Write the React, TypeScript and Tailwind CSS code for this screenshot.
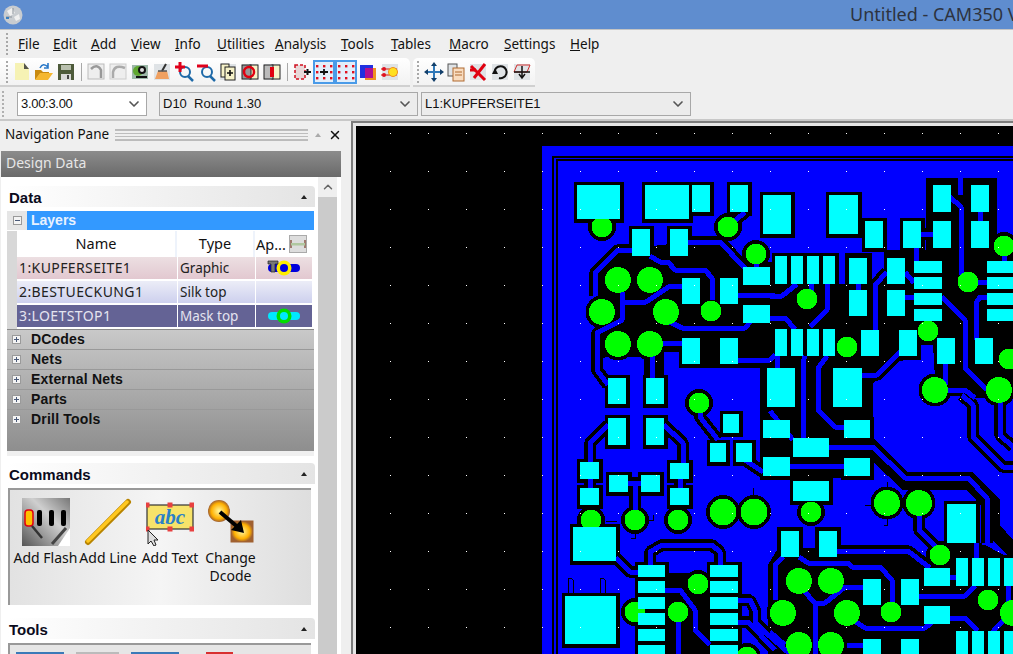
import { ChevronDown, ChevronUp, X } from 'lucide-react';

// ---------- pcb data, all coordinates are screen pixels ----------
const pads = [
  [577, 185, 620, 219], [645, 185, 689, 219], [692, 185, 710, 212], [730, 185, 748, 212], [763, 195, 791, 234],
  [632, 229, 650, 256], [670, 229, 688, 256], [682, 278, 700, 304], [720, 278, 738, 304], [743, 267, 770, 285],
  [743, 305, 770, 323], [682, 338, 700, 364], [720, 338, 738, 364], [608, 378, 626, 404], [646, 378, 664, 404],
  [767, 368, 795, 407], [829, 195, 858, 234], [865, 221, 883, 248], [903, 221, 921, 248], [933, 185, 951, 212],
  [971, 185, 989, 212], [933, 221, 951, 248], [971, 221, 989, 248], [775, 256, 787, 284], [791, 256, 803, 284],
  [807, 256, 819, 284], [823, 256, 835, 284], [849, 258, 867, 284], [887, 258, 905, 284], [849, 290, 867, 316],
  [887, 290, 905, 316], [914, 261, 942, 273], [914, 277, 942, 289], [914, 293, 942, 305], [914, 309, 942, 321],
  [987, 261, 1013, 273], [987, 277, 1013, 289], [987, 293, 1013, 305], [987, 309, 1013, 321], [775, 329, 787, 356],
  [791, 329, 803, 356], [807, 329, 819, 356], [823, 329, 835, 356], [861, 330, 879, 356], [899, 330, 917, 356],
  [937, 338, 955, 364], [975, 338, 993, 364], [833, 368, 862, 407], [608, 418, 626, 445], [646, 418, 664, 445],
  [723, 414, 739, 433], [763, 420, 790, 438], [710, 443, 726, 462], [736, 443, 752, 462], [763, 457, 790, 476],
  [580, 462, 599, 479], [670, 463, 689, 479], [609, 475, 628, 492], [641, 475, 660, 492], [580, 488, 599, 505],
  [670, 488, 689, 505], [573, 527, 616, 561], [565, 596, 616, 644], [638, 565, 665, 577], [638, 581, 665, 593],
  [638, 597, 665, 609], [638, 613, 665, 625], [638, 629, 665, 641], [638, 645, 665, 657], [710, 565, 738, 577],
  [710, 581, 738, 593], [710, 597, 738, 609], [710, 613, 738, 625], [710, 629, 738, 641], [710, 645, 738, 657],
  [793, 438, 829, 457], [844, 420, 870, 438], [844, 458, 870, 476], [793, 481, 829, 501], [781, 531, 799, 557],
  [819, 531, 837, 557], [947, 504, 976, 543], [956, 558, 968, 586], [972, 558, 984, 586], [988, 558, 1000, 586],
  [1004, 558, 1013, 586], [924, 568, 950, 586], [924, 606, 950, 624], [863, 579, 881, 605], [901, 579, 919, 605],
  [863, 639, 881, 654], [901, 639, 919, 654], [956, 631, 968, 654], [972, 631, 984, 654], [988, 631, 1000, 654],
  [1004, 631, 1013, 654],
];

const vias = [
  [602, 227, 10.5], [728, 227, 10.5], [756, 254, 10.5], [618, 280, 13], [650, 280, 13], [602, 312, 13], [666, 312, 13],
  [711, 311, 10.5], [618, 344, 13], [650, 344, 13], [699, 403, 10.5], [1004, 246, 10.5], [807, 299, 10.5], [968, 282, 10.5],
  [928, 331, 10.5], [847, 347, 10.5], [1009, 359, 10.5], [935, 390, 13], [999, 390, 13], [591, 520, 10.5], [635, 520, 10.5],
  [678, 520, 10.5], [723, 512, 13.5], [754, 512, 13.5], [698, 584, 10.5], [678, 612, 10.5], [635, 612, 10.5], [747, 657, 10.5],
  [1013, 613, 13], [811, 512, 10.5], [887, 503, 13], [919, 503, 13], [940, 555, 10.5], [799, 581, 13], [831, 581, 13],
  [783, 613, 13], [847, 613, 13], [891, 612, 10.5], [988, 600, 10.5], [799, 645, 13], [831, 645, 13],
];

const blackAreas = [
  '597,278 620,250 720,238 748,262 775,262 775,368 680,368 680,352 664,352 664,378 644,378 644,357 606,357 597,362',
  '775,253 839,253 839,284 845,284 845,253 872,253 872,280 884,268 884,250 926,250 926,178 960,178 960,192 964,196 964,178 997,178 997,236 1013,236 1013,398 962,398 935,378 933,345 920,345 920,359 897,361 873,383 873,438 907,472 972,472 1000,500 1000,525 1013,540 1013,560 987,535 985,510 967,490 903,490 873,462 873,478 760,478 760,368 775,368',
  '768,654 768,565 777,550 777,527 803,527 803,548 815,548 815,527 841,527 841,546 912,546 925,560 935,545 985,545 1013,560 1013,654',
  '666,573 708,573 708,654 666,654',
];

const traces = [
  '632,250 618,250 595,273 595,296', '622,292 622,320 597,333 597,370 608,385',
  '622,302 646,302 670,286 682,286', '650,256 660,262 668,262 675,270 705,270 712,278 712,300',
  '688,242 720,242 745,268', '738,295 775,295', '670,322 682,328 745,328 752,320', '660,343 682,343',
  '738,360 770,360 775,355', '652,356 652,378', '728,227 745,212', '756,254 756,268',
  '770,296 782,296 797,284', '811,284 811,292', '827,284 827,310 810,327', '770,318 785,318 795,329',
  '777,356 777,368', '805,356 803,362 803,438', '827,356 818,368 818,410 835,427 844,427', '858,284 858,290',
  '905,272 914,283', '887,272 875,285 875,330', '905,297 914,297', '916,248 916,261', '921,234 933,234',
  '950,197 961,207 961,275', '960,178 960,195', '980,212 980,221', '1004,256 1004,261', '978,282 987,282',
  '987,297 980,297 976,303 976,340', '942,297 965,320 965,368 987,390', '945,364 945,385', '948,390 965,390 975,398',
  '862,375 877,375 900,352', '883,227 865,227',
  '829,447 873,447 905,478 968,478 987,498 987,543', '790,466 844,466',
  '919,515 919,530 937,548', '770,411 793,440', '962,395 973,405 973,437 1003,467 1013,467', '1000,395 1000,435 1013,447',
  '799,557 808,563 848,563 852,567 880,567 892,580 892,605', '837,551 908,551 930,568', '950,577 956,577',
  '919,596 965,596 975,586', '863,587 845,587 825,603 815,603 803,590', '815,603 815,654',
  '856,622 865,628 925,628 935,620', '950,618 965,618 978,631', '847,645 863,645', '783,557 775,565 775,600',
  '770,632 785,645', '1008,586 1008,615 990,635', '976,543 977,558',
  '608,425 590,443 590,462', '664,425 683,443 683,463', '628,483 641,483', '635,483 635,520', '590,479 590,488', '680,479 680,488',
  '616,558 630,572 638,572', '650,565 650,552 662,545 712,545 720,552 720,565', '700,410 700,417 718,440',
  '745,460 763,472', '665,590 680,590 695,610 695,630 710,645', '738,600 750,600 755,610 755,622 765,632 790,654',
  '738,622 748,622 775,650', '678,620 678,654',
];

const thinLines = [
  'M568 596 V580 Q570 576 573 580 V596', 'M600 596 V580 Q602 576 605 580 V596',
  'M617 521 H606', 'M645 520 H653 V515', 'M635 531 V538 H631', 'M753 498 V488', 'M766 513 H771',
  'M887 490 V482', 'M887 516 V525 H884', 'M875 505 H865',
];

const gridX = Array.from({ length: 17 }, (_, i) => 390 + i * 38);
const gridY = Array.from({ length: 14 }, (_, i) => 133 + i * 38);

function PcbView() {
  return (
    <svg viewBox="356 126 657 528" width={657} height={528} shapeRendering="crispEdges" className="block">
      <rect x="356" y="126" width="657" height="528" fill="#000" />
      <rect x="542" y="146" width="471" height="508" fill="#0000ff" />
      <path d="M553 654 V157 H1013 M557 654 V160 H1013" fill="none" stroke="#000" strokeWidth="2" />
      {blackAreas.map((p, i) => <polygon key={i} points={p} fill="#000" />)}
      {traces.map((p, i) => <polyline key={i} points={p} fill="none" stroke="#000" strokeWidth="12" strokeLinejoin="bevel" />)}
      {vias.map(([x, y, r], i) => <circle key={i} cx={x} cy={y} r={r + 3.5} fill="#000" />)}
      {pads.map(([a, b, c, d], i) => <rect key={i} x={a - 3.5} y={b - 3.5} width={c - a + 7} height={d - b + 7} fill="#000" />)}
      {traces.map((p, i) => <polyline key={i} points={p} fill="none" stroke="#0000ff" strokeWidth="5" strokeLinejoin="bevel" />)}
      {thinLines.map((d, i) => <path key={i} d={d} fill="none" stroke="#000" strokeWidth="1" />)}
      {vias.map(([x, y, r], i) => <circle key={i} cx={x} cy={y} r={r} fill="#00ff00" />)}
      {pads.map(([a, b, c, d], i) => <rect key={i} x={a} y={b} width={c - a} height={d - b} fill="#00ffff" />)}
      {gridY.map((y) => gridX.map((x) => <rect key={x + '-' + y} x={x} y={y} width="1" height="1" fill="#fff" />))}
    </svg>
  );
}

// ---------- toolbar icons ----------
const Ic = ({ children }: { children: React.ReactNode }) => (
  <svg viewBox="0 0 20 20" width={20} height={20} className="shrink-0">{children}</svg>
);
const Tile = () => <rect x="2" y="2" width="16" height="16" fill="#dfe3e6" />;

const toolIcons: Record<string, React.ReactNode> = {
  neu: <><path d="M3 1 H12 L17 7 V18 H3 Z" fill="#f6f2b4" /><path d="M12 1 L17 7 H12 Z" fill="#55554a" /></>,
  open: <><path d="M1 18 V8 H7 L9 10 H15 V12 H6 Z" fill="#c98a10" /><path d="M1 18 L6 11 H19 L14 18 Z" fill="#f5b731" /><path d="M6 6 Q9 0 14 5 M14 1 V6 H10" fill="none" stroke="#2a78c8" strokeWidth="1.6" /></>,
  save: <><rect x="2" y="2" width="16" height="16" fill="#4d5a3a" /><rect x="5" y="3" width="10" height="5" fill="#b9c0ae" /><rect x="5" y="12" width="10" height="6" fill="#d8d8d8" /><rect x="11" y="13" width="2" height="4" fill="#444" /></>,
  undo: <><rect x="2" y="2" width="16" height="15" fill="#eee" stroke="#bbb" /><path d="M5 7 Q11 1 15 8 L15 16" fill="none" stroke="#999" strokeWidth="2.5" /></>,
  redo: <><rect x="2" y="2" width="16" height="15" fill="#eee" stroke="#ccc" /><path d="M17 6 Q7 2 5 10 L5 16" fill="none" stroke="#aaa" strokeWidth="2.5" /></>,
  layers: <><rect x="2" y="3" width="16" height="14" fill="#9db8a8" /><circle cx="8" cy="9" r="5" fill="#5fa830" /><circle cx="12" cy="8" r="4" fill="#111" /><circle cx="12" cy="8" r="2" fill="#ddd" /><path d="M6 15 H17" stroke="#111" strokeWidth="2" /></>,
  brush: <><Tile /><path d="M3 17 L6 9 H15 L17 17 Z" fill="#f0a060" /><path d="M10 9 L14 2" stroke="#333" strokeWidth="2" /><path d="M6 9 H15" stroke="#555" strokeWidth="1.5" /></>,
  zoomIn: <><circle cx="11" cy="10" r="5" fill="none" stroke="#1f6aa8" strokeWidth="2" /><path d="M14 14 L19 19" stroke="#1f6aa8" strokeWidth="2.5" /><path d="M1 5 H11 M6 0 V10" stroke="#e0001a" strokeWidth="3" /></>,
  zoomOut: <><circle cx="11" cy="10" r="5" fill="none" stroke="#1f6aa8" strokeWidth="2" /><path d="M14 14 L19 19" stroke="#1f6aa8" strokeWidth="2.5" /><path d="M1 4 H12" stroke="#e0001a" strokeWidth="3" /></>,
  pageAdd: <><Tile /><rect x="3" y="2" width="8" height="13" fill="#f6f2c8" stroke="#222" /><rect x="7" y="5" width="10" height="13" fill="#f6f2c8" stroke="#222" /><path d="M9 11 H15 M12 8 V14" stroke="#111" strokeWidth="1.6" /></>,
  pageRing: <><Tile /><rect x="10" y="3" width="8" height="14" fill="#f6f2c8" stroke="#222" /><rect x="2" y="3" width="9" height="14" fill="#999" stroke="#222" /><circle cx="9" cy="10" r="5" fill="none" stroke="#e00010" strokeWidth="2.5" /></>,
  pageBar: <><Tile /><rect x="10" y="3" width="8" height="14" fill="#f6f2c8" stroke="#222" /><rect x="2" y="3" width="9" height="14" fill="#bbb" stroke="#222" /><rect x="8" y="5" width="4" height="10" fill="#e00010" /></>,
  box: <><rect x="3" y="3" width="10" height="14" fill="#e8d8d8" stroke="#d01020" strokeWidth="1.5" strokeDasharray="3 2" /><path d="M12 10 H19 M15.5 7 V13" stroke="#111" strokeWidth="2" /></>,
  gridA: <>{[3, 9, 15].flatMap((y) => [2, 9, 16].map((x) => <rect key={x + '' + y} x={x} y={y} width="2.4" height="2.4" fill="#e0101e" />))}<path d="M6 10 H14 M10 7 V13" stroke="#111" strokeWidth="1.8" /></>,
  gridB: <>{[3, 9, 15].flatMap((y) => [2, 9, 16].map((x) => <rect key={x + '' + y} x={x} y={y} width="2.4" height="2.4" fill="#e0101e" />))}</>,
  color: <><rect x="2" y="3" width="13" height="13" fill="#2030e0" /><rect x="7" y="6" width="11" height="12" fill="#f09020" /><rect x="7" y="6" width="8" height="10" fill="#b01090" /></>,
  spark: <><Tile /><path d="M1 7 H17 M1 13 H17" stroke="#e06050" strokeWidth="1.5" /><circle cx="4" cy="7" r="2" fill="#e01020" /><circle cx="4" cy="13" r="2" fill="#e01020" /><circle cx="13" cy="10" r="4.5" fill="#ffe020" stroke="#f09020" /></>,
  move: <><path d="M10 2 V18 M2 10 H18" stroke="#2f78b8" strokeWidth="2" /><path d="M10 0 L13 4 H7 Z M10 20 L13 16 H7 Z M0 10 L4 7 V13 Z M20 10 L16 7 V13 Z" fill="#123f6a" /></>,
  copy: <><rect x="2" y="2" width="9" height="12" fill="#dfe3e6" stroke="#555" /><rect x="7" y="6" width="11" height="13" fill="#f8dcc0" stroke="#b06a30" /><path d="M9 10 H16 M9 13 H16" stroke="#b06a30" /></>,
  del: <><Tile /><path d="M3 4 L17 18 M17 2 L6 16" stroke="#e00010" strokeWidth="3" /><path d="M2 8 H8" stroke="#e00010" strokeWidth="3" /></>,
  rotate: <><Tile /><path d="M5 8 A6 6 0 1 1 9 16" fill="none" stroke="#111" strokeWidth="2" /><path d="M2 12 L8 12 L5 6 Z" fill="#111" /></>,
  mirror: <><Tile /><path d="M5 3 H18 L15 10 H2 Z" fill="none" stroke="#d03030" /><path d="M2 10 H18 M10 4 V15 M7 12 L10 16 L13 12" stroke="#111" strokeWidth="1.5" fill="none" /></>,
};

const Grip = () => (
  <div className="flex flex-col gap-[2px] w-[2px]">
    {[0, 1, 2, 3, 4, 5].map((i) => <span key={i} className="w-[2px] h-[2px] bg-[#a8a8a8]" />)}
  </div>
);

function ToolBtn({ name, active }: { name: string; active?: boolean }) {
  return (
    <div className={active
      ? 'w-[22px] h-[24px] flex items-center justify-center border-2 border-[#4a9be8] bg-[#e3eefa]'
      : 'w-[22px] h-[24px] flex items-center justify-center'}>
      <Ic>{toolIcons[name]}</Ic>
    </div>
  );
}

const ToolSep = () => <div className="w-[8px] flex justify-center"><span className="w-px h-[18px] bg-[#a9a9a9]" /></div>;

function MenuBar() {
  const items: [string, string, number][] = [
    ['F', 'ile', 53], ['E', 'dit', 91], ['A', 'dd', 131], ['V', 'iew', 175], ['I', 'nfo', 217], ['U', 'tilities', 275],
    ['A', 'nalysis', 341], ['T', 'ools', 391], ['T', 'ables', 449], ['M', 'acro', 504], ['S', 'ettings', 570], ['H', 'elp', 640],
  ];
  let prev = 18;
  return (
    <div className="h-[28px] flex items-center pl-[6px] text-[13.5px] text-[#111]">
      <Grip />
      <div className="w-[10px]" />
      {items.map(([first, rest, next]) => {
        const w = next - prev;
        prev = next;
        return (
          <span key={first + rest} style={{ width: w }}>
            <span className="underline">{first}</span>{rest}
          </span>
        );
      })}
    </div>
  );
}

function Combo({ label, width, white }: { label: string; width: string; white?: boolean }) {
  return (
    <div className={`${width} h-[24px] flex items-center justify-between pl-[3px] pr-[4px] border border-[#a8a8a8] font-['Liberation_Sans',sans-serif] text-[13px] text-[#111] ${white ? 'bg-white tracking-[-0.3px]' : 'bg-[#ececec]'}`}>
      <span className="whitespace-pre">{label}</span>
      <ChevronDown size={16} strokeWidth={2.5} color="#555" />
    </div>
  );
}

// ---------- left pane ----------
function SectionHead({ title }: { title: string }) {
  return (
    <div className="w-[308px] h-[21px] flex items-center justify-between pl-[2px] pr-[8px] rounded-t-[4px] bg-gradient-to-r from-white to-[#e4e4e4]">
      <span className="pt-[4px] font-['Liberation_Sans',sans-serif] font-bold text-[15px] text-[#0b0b1c]">{title}</span>
      <span className="w-0 h-0 border-x-[3px] border-x-transparent border-b-[4px] border-b-[#222]" />
    </div>
  );
}

function TreeBtn({ minus }: { minus?: boolean }) {
  return (
    <span className="relative w-[9px] h-[9px] border border-[#9a9a9a] bg-[#f4f4f4] block">
      <span className="absolute left-[1px] top-[3px] w-[5px] h-px bg-[#4a5a78]" />
      {!minus && <span className="absolute left-[3px] top-[1px] w-px h-[5px] bg-[#4a5a78]" />}
    </span>
  );
}

const LayerRow = ({ name, type, bg, text, icon }: { name: string; type: string; bg: string; text: string; icon?: React.ReactNode }) => (
  <div className={`h-[22px] flex mb-[2px] text-[14px] ${text}`}>
    <div className={`w-[160px] pl-[2px] leading-[22px] tracking-[0.4px] ${bg}`}>{name}</div>
    <div className={`w-[77px] ml-[1px] pl-[2px] leading-[22px] text-[13.5px] ${bg}`}>{type}</div>
    <div className={`w-[56px] ml-[1px] flex items-center justify-center ${bg}`}>{icon}</div>
  </div>
);

const ApCopper = (
  <svg viewBox="0 0 34 16" width={34} height={16}>
    <rect x="1" y="4" width="32" height="8" rx="4" fill="#0000dd" />
    <circle cx="17" cy="8" r="7.5" fill="#ffee00" />
    <circle cx="17" cy="8" r="4" fill="#0000dd" />
    <path d="M1 1 H11 V4 H8 V12 H4 V4 H1 Z" fill="#777" stroke="#222" strokeWidth="0.7" />
  </svg>
);
const ApMask = (
  <svg viewBox="0 0 34 16" width={34} height={16}>
    <rect x="1" y="4" width="32" height="8" rx="4" fill="#00e8ff" />
    <circle cx="17" cy="8" r="7.5" fill="#00dd00" />
    <circle cx="17" cy="8" r="4" fill="#00e8ff" />
  </svg>
);

const AddFlash = (
  <svg viewBox="0 0 48 48" width={48} height={48}>
    <defs><linearGradient id="fl" x1="0" y1="1" x2="1" y2="0"><stop offset="0" stopColor="#555" /><stop offset="0.6" stopColor="#cfcfcf" /><stop offset="1" stopColor="#777" /></linearGradient></defs>
    <rect width="48" height="48" fill="url(#fl)" />
    <path d="M36 48 L48 30 V48 Z" fill="#fff" />
    <rect x="3" y="12" width="8" height="16" rx="3" fill="#ffc000" stroke="#e00010" strokeWidth="1.5" />
    {[15, 27, 39].map((x) => <rect key={x} x={x} y="12" width="5" height="16" rx="2" fill="#000" />)}
    <path d="M10 28 L20 40" stroke="#333" strokeWidth="2.5" />
    <path d="M30 46 L44 30" stroke="#444" strokeWidth="3" />
  </svg>
);
const AddLine = (
  <svg viewBox="0 0 48 48" width={48} height={48}>
    <path d="M4 44 L44 4" stroke="#b88400" strokeWidth="6" strokeLinecap="round" />
    <path d="M4 43 L43 4" stroke="#ffc820" strokeWidth="3.5" strokeLinecap="round" />
  </svg>
);
const AddText = (
  <svg viewBox="0 0 48 48" width={48} height={48}>
    <rect x="1" y="7" width="46" height="24" fill="#f7e36a" stroke="#333" strokeWidth="1.2" />
    <text x="24" y="26" textAnchor="middle" fontFamily="'Liberation Serif', serif" fontStyle="italic" fontWeight="bold" fontSize="21" fill="#2a80c8">abc</text>
    {[[1, 7], [24, 7], [46, 7], [1, 31], [24, 31], [46, 31]].map(([x, y]) => <rect key={x + '-' + y} x={x - 2.5} y={y - 2.5} width="5" height="5" fill="#e84040" />)}
    <path d="M2 32 V46 L5 43 L8 48 L10 47 L8 42 L12 42 Z" fill="#ddd" stroke="#222" />
  </svg>
);
const ChangeDcode = (
  <svg viewBox="0 0 48 48" width={48} height={48}>
    <defs>
      <radialGradient id="cg"><stop offset="0" stopColor="#fff8a0" /><stop offset="0.7" stopColor="#ffb000" /><stop offset="1" stopColor="#a06030" /></radialGradient>
    </defs>
    <circle cx="12" cy="13" r="11" fill="url(#cg)" />
    <rect x="24" y="23" width="22" height="21" fill="url(#cg)" stroke="#a06030" />
    <path d="M13 14 L33 31" stroke="#000" strokeWidth="4" />
    <path d="M37 35 L24 32 L34 22 Z" fill="#000" />
  </svg>
);

const commands = [
  { icon: AddFlash, label: 'Add Flash', w: 71 },
  { icon: AddLine, label: 'Add Line', w: 54 },
  { icon: AddText, label: 'Add Text', w: 70 },
  { icon: ChangeDcode, label: 'Change\nDcode', w: 51 },
];

function NavPane() {
  return (
    <div className="w-[351px] flex flex-col shrink-0 overflow-hidden">
      <div className="h-[27px] flex items-center pl-[5px] text-[13.5px] text-[#111]">
        <span className="w-[110px] whitespace-nowrap">Navigation Pane</span>
        <div className="w-[193px] h-[12px] border-y border-[#bbb] bg-[repeating-linear-gradient(#bdbdbd_0_1px,#efefef_1px_3px)]" />
        <span className="ml-[7px] w-0 h-0 border-x-[3px] border-x-transparent border-b-[4px] border-b-[#aaa]" />
        <X size={14} strokeWidth={2.5} color="#111" className="ml-[7px]" />
      </div>
      <div className="w-[340px] ml-[1px] mt-[3px] h-[26px] flex items-center pl-[5px] pb-[3px] text-[14px] text-[#e6e6e6] bg-gradient-to-b from-[#8c8c8c] to-[#6a6a6a]">
        Design Data
      </div>
      <div className="flex flex-1 min-h-0 ml-[1px] w-[340px] overflow-hidden">
        <div className="w-[317px] bg-white pl-[6px] pt-[9px] overflow-hidden">
          <SectionHead title="Data" />
          <div className="w-[307px] mt-[4px] h-[19px] flex">
            <div className="w-[20px] bg-[#e6e6e6] flex items-center justify-center"><TreeBtn minus /></div>
            <div className="flex-1 bg-[#3399ff] pl-[4px] font-['Liberation_Sans',sans-serif] font-bold text-[14px] leading-[19px] text-[#e8f2ff]">Layers</div>
          </div>
          <div className="w-[307px] flex bg-white mt-[1px]">
            <div className="w-[10px] bg-[#d8d8d8]" />
            <div className="flex-1 pt-0">
              <div className="h-[26px] flex text-[14.5px] text-[#111]">
                <div className="w-[160px] text-center leading-[24px] border-r-2 border-[#eef3fb]">Name</div>
                <div className="w-[78px] text-center leading-[24px] border-r-2 border-[#eef3fb]">Type</div>
                <div className="w-[57px] flex items-center pl-[1px]">
                  <span className="leading-[24px]">Ap...</span>
                  <span className="ml-[3px] w-[18px] h-[18px] border border-[#aaa] bg-[#ddd] flex items-center justify-center">
                    <svg viewBox="0 0 16 8" width={16} height={8}><path d="M1 0 V8 M15 0 V8" stroke="#8a5a4a" strokeWidth="1.5" /><rect x="1" y="3" width="14" height="2.5" fill="#b0c8a0" /></svg>
                  </span>
                </div>
              </div>
              <LayerRow name="1:KUPFERSEITE1" type="Graphic" bg="bg-gradient-to-b from-[#ecdfe2] to-[#e2c8d0]" text="text-[#222]" icon={ApCopper} />
              <LayerRow name="2:BESTUECKUNG1" type="Silk top" bg="bg-gradient-to-b from-[#ecedf7] to-[#cdd0ee]" text="text-[#222]" />
              <LayerRow name="3:LOETSTOP1" type="Mask top" bg="bg-[#646395]" text="text-[#e4e4f0]" icon={ApMask} />
            </div>
          </div>
          <div className="w-[307px] h-[122px] bg-gradient-to-b from-[#c9c9c9] to-[#8e8e8e] border-t border-[#8a8a8a]">
            {['DCodes', 'Nets', 'External Nets', 'Parts', 'Drill Tools'].map((t) => (
              <div key={t} className="h-[20px] flex items-center border-b border-[#999]">
                <div className="w-[24px] flex pl-[5px]"><TreeBtn /></div>
                <span className="font-['Liberation_Sans',sans-serif] font-bold text-[14px] text-[#111] tracking-[0.2px]">{t}</span>
              </div>
            ))}
          </div>
          <div className="w-[307px] h-[5px] mb-[7px] bg-[#f0f0f0]" />
          <SectionHead title="Commands" />
          <div className="w-[303px] h-[117px] mt-[4px] ml-[1px] flex border-l-2 border-t-2 border-[#999] bg-gradient-to-r from-[#e2e2e2] via-[#f5f5f5] to-[#dedede] text-[14px] text-[#111]">
            {commands.map((c) => (
              <div key={c.label} className="flex flex-col flex-none pt-[8px] items-center text-center leading-[18px]" style={{ width: c.w }}>
                {c.icon}
                <span className="mt-[3px] whitespace-pre">{c.label}</span>
              </div>
            ))}
          </div>
          <div className="w-[307px] h-[13px]" />
          <SectionHead title="Tools" />
          <div className="w-[303px] h-[40px] mt-[4px] ml-[1px] border-l-2 border-t-2 border-[#999] bg-[#e6e6e6] flex pt-[7px] pl-[6px] gap-[12px]">
            <span className="w-[48px] h-[3px] bg-[#3a7ab8]" />
            <span className="w-[43px] h-[3px] bg-[#bbb]" />
            <span className="w-[48px] h-[3px] bg-[#3a7ab8]" />
            <span className="w-[27px] h-[3px] bg-[#d83030] ml-[15px]" />
          </div>
        </div>
        <div className="w-[19px] bg-[#cbcbcb] relative">
          <div className="h-[20px] bg-[#efefef] flex items-center justify-center"><ChevronUp size={14} strokeWidth={2.5} color="#666" /></div>
        </div>
        <div className="w-[4px] bg-white" />
      </div>
    </div>
  );
}

export default function App() {
  return (
    <div className="w-[1013px] h-[654px] overflow-hidden flex flex-col bg-[#efefef] font-['Noto_Sans',sans-serif]">
      <div className="h-[30px] shrink-0 flex items-center justify-between pl-[3px] bg-[#5f8dcf] border-b border-[#c4c4c4]">
        <svg viewBox="0 0 20 20" width={20} height={20}>
          <circle cx="10" cy="10" r="9.5" fill="#c8ccd0" />
          <path d="M4 6 L9 3 L12 8 L7 11 Z M11 12 L16 9 L17 14 L13 16 Z" fill="#f0f0f0" />
          <path d="M3 12 H9 M10 3 V9" stroke="#8a929a" />
          <rect x="3" y="12" width="3" height="2" fill="#3a80c0" />
        </svg>
        <span className="text-[18px] text-[#2d3340] whitespace-nowrap w-[163px] overflow-hidden">Untitled - CAM350 V</span>
      </div>
      <MenuBar />
      <div className="h-[29px] shrink-0 flex">
        <div className="w-[410px] flex items-center pl-[6px] rounded-tr-[5px] bg-gradient-to-b from-white to-[#f2f2f2] border-b-2 border-[#d0d0d0]">
          <Grip />
          <div className="w-[3px]" />
          <ToolBtn name="neu" /><ToolBtn name="open" /><ToolBtn name="save" />
          <ToolSep />
          <ToolBtn name="undo" /><ToolBtn name="redo" /><ToolBtn name="layers" /><ToolBtn name="brush" />
          <ToolBtn name="zoomIn" /><ToolBtn name="zoomOut" /><ToolBtn name="pageAdd" /><ToolBtn name="pageRing" /><ToolBtn name="pageBar" />
          <ToolSep />
          <ToolBtn name="box" /><ToolBtn name="gridA" active /><ToolBtn name="gridB" active /><ToolBtn name="color" /><ToolBtn name="spark" />
        </div>
        <div className="w-[122px] ml-[3px] flex items-center pl-[4px] rounded-t-[5px] bg-gradient-to-b from-white to-[#f2f2f2] border-b-2 border-[#d0d0d0]">
          <Grip />
          <div className="w-[4px]" />
          <ToolBtn name="move" /><ToolBtn name="copy" /><ToolBtn name="del" /><ToolBtn name="rotate" /><ToolBtn name="mirror" />
        </div>
      </div>
      <div className="h-[34px] shrink-0 flex items-center pl-[2px] pt-[1px] border-b-2 border-[#c8c8c8]">
        <div className="flex flex-col gap-[2px] w-[2px] mr-[13px]">
          {[0, 1, 2, 3, 4, 5, 6].map((i) => <span key={i} className="w-[2px] h-[2px] bg-[#b0b0b0]" />)}
        </div>
        <Combo label="3.00:3.00" width="w-[130px]" white />
        <div className="w-[12px]" />
        <Combo label="D10  Round 1.30" width="w-[259px]" />
        <div className="w-[3px]" />
        <Combo label="L1:KUPFERSEITE1" width="w-[270px]" />
      </div>
      <div className="flex flex-1 min-h-0">
        <NavPane />
        <div className="flex-1 min-w-0 border-l-2 border-t-2 border-[#7c7c7c] flex flex-col">
          <div className="flex-1 min-h-0 border-l-[3px] border-t-[3px] border-[#e6e6e6] overflow-hidden">
            <PcbView />
          </div>
        </div>
      </div>
    </div>
  );
}
